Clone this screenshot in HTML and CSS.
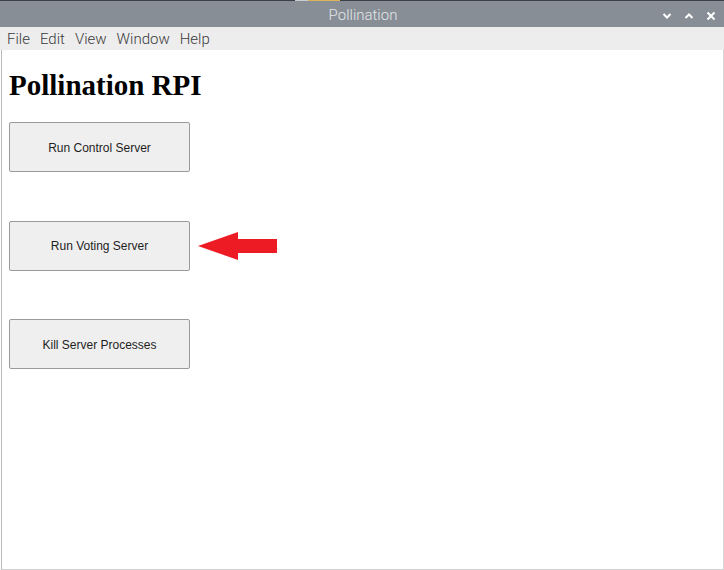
FILE: index.html
```html
<!DOCTYPE html>
<html>
<head>
<meta charset="utf-8">
<title>Pollination</title>
<link rel="stylesheet" href="styles.css">
</head>
<body>
<div class="window">
  <div class="topline"><span class="seg-gray"></span><span class="seg-gold"></span></div>
  <div class="titlebar">
    <div class="title">Pollination</div>
    <div class="controls">
      <svg width="10" height="8" viewBox="0 0 10 8"><path d="M1.5 2 L5 5.5 L8.5 2" fill="none" stroke="#fff" stroke-width="2"/></svg>
      <svg width="10" height="8" viewBox="0 0 10 8"><path d="M1.5 6 L5 2.5 L8.5 6" fill="none" stroke="#fff" stroke-width="2"/></svg>
      <svg width="10" height="10" viewBox="0 0 10 10"><path d="M1.5 1.5 L8.5 8.5 M8.5 1.5 L1.5 8.5" fill="none" stroke="#fff" stroke-width="2"/></svg>
    </div>
  </div>
  <div class="menubar">
    <span>File</span><span>Edit</span><span>View</span><span>Window</span><span>Help</span>
  </div>
  <div class="content">
    <h1>Pollination RPI</h1>
    <div class="buttons">
      <button class="btn">Run Control Server</button>
      <div class="btn-row">
        <button class="btn">Run Voting Server</button>
        <svg class="arrow" width="80" height="30" viewBox="0 0 80 30"><polygon points="0,14 40,0 40,7 79,7 79,21 40,21 40,28" fill="#ed1c24"/></svg>
      </div>
      <button class="btn">Kill Server Processes</button>
    </div>
  </div>
</div>
</body>
</html>
```
FILE: styles.css
```css
html, body {
  margin: 0;
  padding: 0;
  background: #ffffff;
}
.window {
  width: 724px;
  height: 570px;
  display: flex;
  flex-direction: column;
}
.topline {
  height: 1px;
  background: #3c4148;
  display: flex;
  padding-left: 295px;
}
.seg-gray {
  width: 13px;
  background: #c9cdd2;
}
.seg-gold {
  width: 32px;
  background: #d9b45c;
}
.titlebar {
  height: 26px;
  background: #878e96;
  position: relative;
  display: flex;
  align-items: center;
  justify-content: center;
}
.title {
  font-family: Roboto, "Liberation Sans", sans-serif;
  font-weight: 300;
  font-size: 15px;
  color: #e4e6e8;
  padding: 2px 0 0 2px;
}
.controls {
  position: absolute;
  right: 8px;
  top: 10px;
  display: flex;
  gap: 12px;
  align-items: center;
}
.menubar {
  height: 23px;
  background: #ededed;
  display: flex;
  align-items: center;
  padding-left: 7px;
  gap: 10px;
  font-family: Roboto, "Liberation Sans", sans-serif;
  font-weight: 300;
  font-size: 15px;
  color: #3a3a3a;
}
.content {
  flex: 1;
  margin-left: 1px;
  border-left: 1px solid #b9b9b9;
  border-right: 1px solid #d8d8d8;
  border-bottom: 1px solid #d0d0d0;
  background: #fff;
  padding: 19px 0 0 7px;
}
h1 {
  margin: 0;
  font-family: "Liberation Serif", serif;
  font-weight: bold;
  font-size: 29px;
  line-height: 32px;
  color: #000;
}
.buttons {
  margin-top: 21px;
  display: flex;
  flex-direction: column;
  gap: 48.5px;
}
.btn-row {
  display: flex;
  align-items: center;
  gap: 8px;
}
.btn {
  width: 181px;
  height: 50px;
  background: #efefef;
  border: 1px solid #9a9a9a;
  border-radius: 2px;
  font-family: "Liberation Sans", Arial, sans-serif;
  font-size: 12px;
  color: #1e1e1e;
  padding: 1px 0 0 0;
}
.arrow {
  display: block;
  margin-top: 2px;
}
```
